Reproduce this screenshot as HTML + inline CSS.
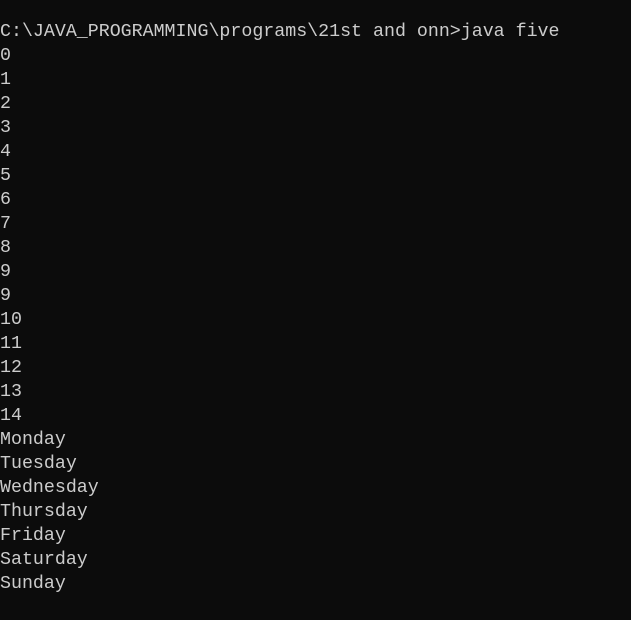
<!DOCTYPE html>
<html><head><style>
html,body{margin:0;padding:0;background:#0c0c0c;width:631px;height:620px;overflow:hidden}
pre{margin:0;position:absolute;left:0;top:20px;font-family:"Liberation Mono",monospace;font-size:18.3px;line-height:24px;color:#cccccc}
</style></head><body>
<pre>C:\JAVA_PROGRAMMING\programs\21st and onn>java five
0
1
2
3
4
5
6
7
8
9
9
10
11
12
13
14
Monday
Tuesday
Wednesday
Thursday
Friday
Saturday
Sunday</pre>
</body></html>
